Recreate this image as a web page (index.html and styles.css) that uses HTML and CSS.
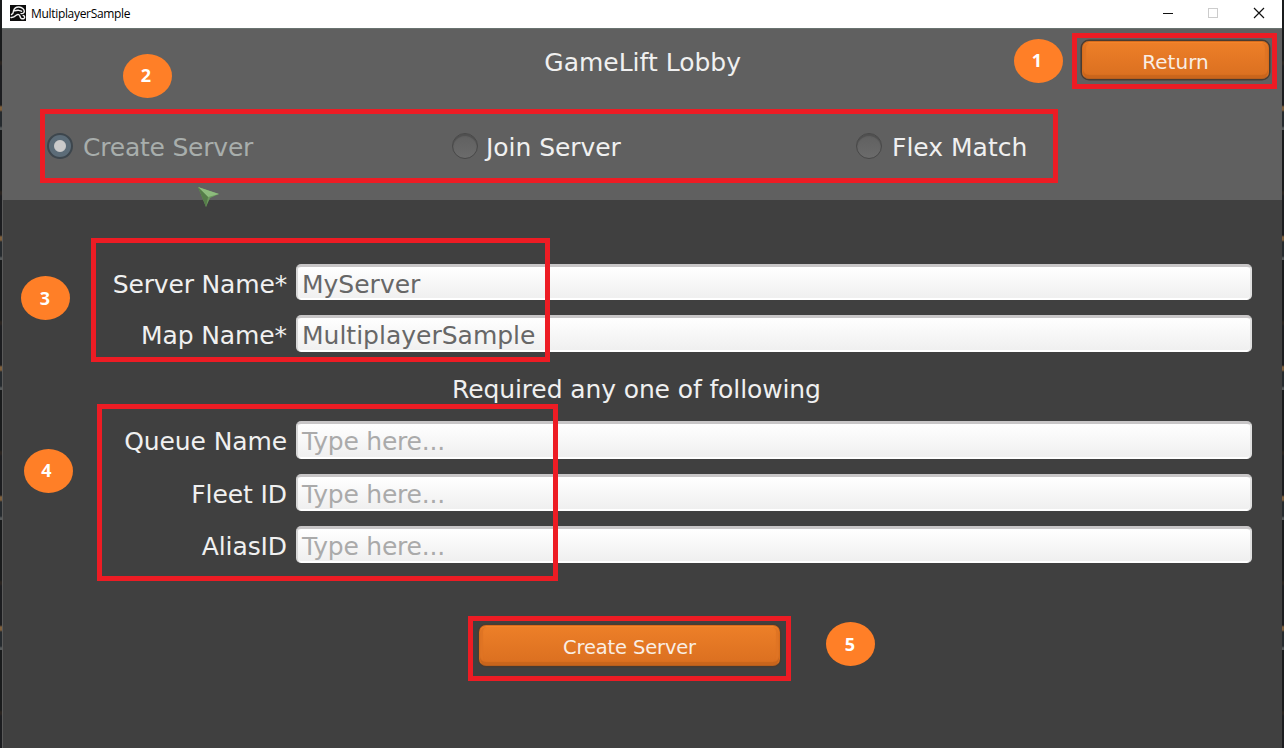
FILE: index.html
```html
<!DOCTYPE html>
<html lang="en">
<head>
<meta charset="utf-8">
<title>MultiplayerSample</title>
<link rel="stylesheet" href="styles.css">
</head>
<body>
<div class="window">
  <header class="titlebar">
    <svg class="app-icon" viewBox="0 0 16 16"><rect width="16" height="16" fill="#0c0c0c"/><g fill="none" stroke="#f4f4f4" stroke-width="1.4" stroke-linecap="round"><path d="M1.500 9.500C3.500 9 3.300 7 3.600 5.500C4.500 3 6.500 1.800 9 2C12 2.200 14.500 4.200 14.300 6.500C14 8.500 12.500 8.800 11 8.600"/><path d="M4.500 5.800L8 5.200L11.500 6.200"/><path d="M1 12.500C4 12.800 5 11.500 6.500 10C8 9 9.800 9.500 10 11.500C10.500 13.500 12 14.300 14 13.500C15.200 12.500 14.600 10.500 13.200 10.500"/></g></svg>
    <span class="app-title">MultiplayerSample</span>
    <svg class="controls" viewBox="0 0 104 14"><path d="M1 7.500H11" stroke="#111"/><rect x="46.500" y="2.500" width="9" height="9" fill="none" stroke="#ccc"/><path d="M92 2L102 12M102 2L92 12" stroke="#111" stroke-width="1.200"/></svg>
  </header>
  <section class="lobby">
    <div class="heading-row">
      <h1 class="heading">GameLift Lobby</h1>
      <button class="btn btn-return">Return</button>
    </div>
    <div class="modes">
      <label class="mode selected"><span class="radio"></span>Create Server</label>
      <label class="mode"><span class="radio"></span>Join Server</label>
      <label class="mode"><span class="radio"></span>Flex Match</label>
    </div>
  </section>
  <main class="form">
    <div class="row name"><span class="label">Server Name*</span><div class="field">MyServer</div></div>
    <div class="row map"><span class="label">Map Name*</span><div class="field">MultiplayerSample</div></div>
    <p class="note">Required any one of following</p>
    <div class="row queue"><span class="label">Queue Name</span><div class="field hint">Type here...</div></div>
    <div class="row fleet"><span class="label">Fleet ID</span><div class="field hint">Type here...</div></div>
    <div class="row alias"><span class="label">AliasID</span><div class="field hint">Type here...</div></div>
    <button class="btn btn-create">Create Server</button>
  </main>
</div>
<div class="frame frame-1"></div>
<div class="frame frame-2"></div>
<div class="frame frame-3"></div>
<div class="frame frame-4"></div>
<div class="frame frame-5"></div>
<span class="badge badge-1">1</span>
<span class="badge badge-2">2</span>
<span class="badge badge-3">3</span>
<span class="badge badge-4">4</span>
<span class="badge badge-5">5</span>
<svg class="cursor" viewBox="0 0 22 20"><path d="M0 0L21 7L12 11L8 20Z" fill="#6c9a5d"/><path d="M0 0L21 7L10 10Z" fill="#8dbb7d"/><path d="M0 0L10 10L8 20Z" fill="#557c49"/></svg>
</body>
</html>
```

FILE: styles.css
```css
* { box-sizing: border-box; }
body {
  margin: 0;
  width: 1284px;
  height: 748px;
  overflow: hidden;
  position: relative;
  padding: 0 2px;
  background: repeating-linear-gradient(#191b1c 0 60px, #29231f 62px 64px, #1c1d20 66px 105px, #80603d 107px 110px, #252a2e 112px 126px, #55595a 128px 130px);
  font-family: "DejaVu Sans", sans-serif;
  font-size: 25px;
  color: #f0f0f0;
}
.window { height: 748px; display: flex; flex-direction: column; background: #404040; box-shadow: inset 1px 0 #5a5a5a; }
.titlebar {
  height: 29px;
  flex: none;
  display: flex;
  align-items: center;
  padding: 0 16px 2px 8px;
  background: #fff;
  border-bottom: 1px solid #697370;
}
.app-icon { width: 16px; height: 16px; }
.app-title { margin: 1px auto 0 5px; font: 12px "Open Sans", sans-serif; letter-spacing: -.32px; color: #000; }
.controls { width: 104px; height: 14px; }
.lobby { height: 171px; flex: none; background: #606060; }
.heading-row { height: 66px; display: flex; justify-content: flex-end; align-items: flex-start; padding: 12px 13px 0 0; }
.heading { margin: 7px 341px 0 0; font-size: 25px; font-weight: 400; line-height: 30px; white-space: nowrap; }
.modes { display: grid; grid-template-columns: 405px 404px 1fr; padding: 38px 0 0 45px; }
.mode { display: flex; align-items: center; line-height: 30px; white-space: nowrap; }
.mode:nth-child(2) { letter-spacing: -.05px; }
.mode:nth-child(2) .radio { margin-right: 8px; }
.radio {
  width: 26px;
  height: 26px;
  margin: -5px 10px 0 0;
  border-radius: 50%;
  border: 1px solid #484848;
  background: linear-gradient(#606060, #6b6b6b);
  box-shadow: inset 0 2px 1px #505050;
}
.selected { color: #a8aeac; letter-spacing: -.22px; }
.selected .radio { border: 2px solid #3d464d; background: radial-gradient(circle, #cbcbcb 0 5px, #c4c4c4 5.500px, #5c6c78 6.500px); box-shadow: none; }
.form { flex: 1; display: flex; flex-direction: column; padding: 64px 30px 0 24px; }
.row { display: grid; grid-template-columns: 261px 956px; column-gap: 9px; height: 36px; flex: none; }
.label { align-self: center; text-align: right; line-height: 30px; padding-top: 5px; white-space: nowrap; letter-spacing: -.1px; }
.name .label { letter-spacing: -.17px; }
.queue .label { padding-top: 3px; }
.field {
  display: flex;
  align-items: center;
  padding: 3px 0 0 4px;
  border-radius: 5px;
  border: solid #ccc;
  border-width: 3px 2px 1px;
  border-color: #c8c6c7 #e0e0e0 #fff #d8d8d8;
  background: linear-gradient(#fff, #efefef);
  box-shadow: inset 0 -1px #fff;
  color: #676767;
  line-height: 28px;
}
.hint { color: #aaa; letter-spacing: -.22px; }
.queue .hint { padding-top: 1px; }
.map { margin-top: 15px; height: 37px; }
.note { margin: 23px 0 16px 426px; line-height: 30px; letter-spacing: -.11px; }
.queue { height: 38px; }
.fleet { margin-top: 15px; height: 37px; }
.alias { margin-top: 15px; height: 37px; }
.btn {
  flex: none;
  padding: 4px 0 0;
  border: 1px solid #d76d1c;
  border-bottom-color: #b85e1c;
  border-radius: 7px;
  background: linear-gradient(#ed7f28, #da6f20);
  box-shadow: 0 0 0 1.500px #493b31, inset 0 1px #f4842a, inset 0 -3px 1px #c9651c, inset 3px 0 1px #df7424, inset -3px 0 1px #df7424;
  color: #f9eee4;
  font: 20px "DejaVu Sans", sans-serif;
}
.btn-return { width: 187px; height: 38px; }
.btn-create { width: 301px; height: 41px; margin: 62px 0 0 453px; font-size: 19.500px; letter-spacing: -.15px; }
.frame { position: absolute; border: 5px solid #ed1c24; }
.frame-1 { left: 1072px; top: 33px; width: 205px; height: 56px; }
.frame-2 { left: 40px; top: 109px; width: 1018px; height: 74px; }
.frame-3 { left: 91px; top: 238px; width: 459px; height: 124px; }
.frame-4 { left: 97px; top: 404px; width: 461px; height: 177px; }
.frame-5 { left: 468px; top: 616px; width: 323px; height: 65px; }
.badge {
  position: absolute;
  width: 49px;
  height: 44px;
  padding-right: 3px;
  border-radius: 50%;
  background: #ff7f27;
  color: #fff;
  font: bold 18px/42px "Open Sans", sans-serif;
  text-align: center;
}
.badge-1 { left: 1014px; top: 39px; }
.badge-2 { left: 123px; top: 54px; }
.badge-3 { left: 21px; top: 276px; padding-right: 1px; line-height: 44px; }
.badge-4 { left: 24px; top: 449px; padding-right: 4px; }
.badge-5 { left: 826px; top: 622px; padding-right: 1px; line-height: 44px; }
.cursor { position: absolute; left: 198px; top: 187px; width: 22px; height: 20px; }
```
